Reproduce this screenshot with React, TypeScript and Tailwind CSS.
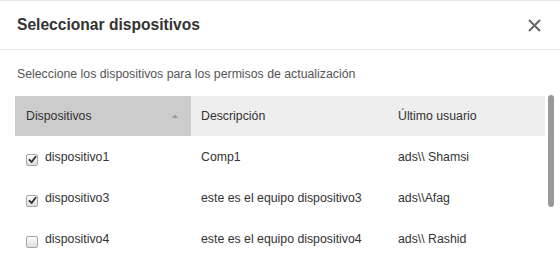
import React from "react";

const rows = [
  { name: "dispositivo1", desc: "Comp1", user: "ads\\\\ Shamsi", checked: true },
  { name: "dispositivo3", desc: "este es el equipo dispositivo3", user: "ads\\\\Afag", checked: true },
  { name: "dispositivo4", desc: "este es el equipo dispositivo4", user: "ads\\\\ Rashid", checked: false },
];

function Check({ checked }: { checked: boolean }) {
  return (
    <span className="relative top-[3px] inline-flex h-[12px] w-[12px] shrink-0 items-center justify-center rounded-[2px] border border-[#a6a6a6] bg-gradient-to-b from-[#fdfdfd] to-[#dedede]">
      {checked && (
        <svg width="9" height="9" viewBox="0 0 9 9">
          <path d="M1.5 4.8 L3.6 7 L7.6 1.8" fill="none" stroke="#2b2b2b" strokeWidth="1.8" strokeLinecap="round" strokeLinejoin="round" />
        </svg>
      )}
    </span>
  );
}

export default function App() {
  return (
    <div className="h-[255px] w-[560px] overflow-hidden border-t border-[#e6e6e6] bg-white font-['Liberation_Sans',Arial,sans-serif] text-[#333]">
      <div className="flex h-[49px] items-center justify-between border-b border-[#e6e6e6] pl-[17px] pr-[19px]">
        <div className="text-[15.6px] font-bold text-[#333]">Seleccionar dispositivos</div>
        <svg width="13" height="13" viewBox="0 0 13 13">
          <path d="M1 1 L12 12 M12 1 L1 12" stroke="#666" strokeWidth="2" />
        </svg>
      </div>
      <div className="relative pl-[15px] pt-[17px]">
        <div className="pl-[2px] text-[12.3px] leading-[14px] text-[#555]">
          Seleccione los dispositivos para los permisos de actualización
        </div>
        <div className="mt-[15px] w-[530px] text-[12.3px] leading-[14px]">
          <div className="flex h-[40px] items-center">
            <div className="flex h-full w-[176px] items-center justify-between bg-[#cccccc] pl-[11px] pr-[13px]">
              <span>Dispositivos</span>
              <svg width="6" height="4" viewBox="0 0 6 4">
                <path d="M0 4 L3 0.5 L6 4 Z" fill="#999" />
              </svg>
            </div>
            <div className="flex h-full w-[197px] items-center bg-[#eeeeee] pl-[10px]">Descripción</div>
            <div className="flex h-full flex-1 items-center bg-[#eeeeee] pl-[10px]">Último usuario</div>
          </div>
          {rows.map((r) => (
            <div key={r.name} className="flex h-[41px] items-center">
              <div className="flex w-[176px] items-center gap-[7px] pl-[11px]">
                <Check checked={r.checked} />
                <span>{r.name}</span>
              </div>
              <div className="w-[197px] pl-[10px]">{r.desc}</div>
              <div className="flex-1 pl-[10px]">{r.user}</div>
            </div>
          ))}
        </div>
        <div className="absolute left-[548px] top-[45px] h-[112px] w-[6px] rounded-full bg-[#999]" />
      </div>
    </div>
  );
}
